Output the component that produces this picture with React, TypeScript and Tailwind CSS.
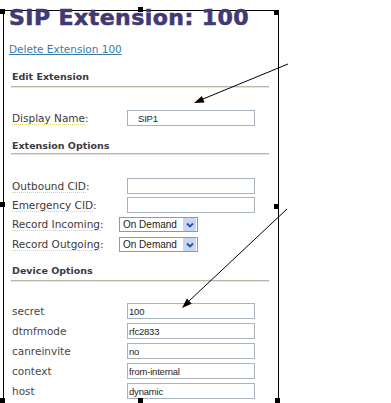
import React from "react";

const labelFont = "font-['DejaVu_Sans',sans-serif]";
const inputClasses =
  "h-[16px] w-[128px] border border-[#a9b3bd] bg-white pl-[1px] text-[9.5px] leading-[14px] tracking-[-0.2px] text-[#1e1e1e] font-['Liberation_Sans',Arial,sans-serif] outline-none";

const SectionHeader = ({ title, mt }: { title: string; mt: string }) => (
  <div
    className={`${mt} h-[12px] pl-[8px] text-[9.5px] leading-[12px] font-bold text-[#3a3a44] ${labelFont}`}
  >
    {title}
  </div>
);

const Rule = ({ mt }: { mt: string }) => (
  <div className={`${mt} ml-[7px] h-[2px] w-[258px] border-t border-[#b9b5a7] bg-[#e6e3da]`} />
);

const HelpLabel = ({ text, width }: { text: string; width: string }) => (
  <div className={`${width} shrink-0 text-[10.5px] leading-[13px] text-[#3a3a3a] ${labelFont}`}>
    <span className="border-b border-dotted border-[#e3cf7a]">{text}</span>:
  </div>
);

const TextRow = ({
  label,
  value,
  mt,
  help,
  pad,
}: {
  label: string;
  value: string;
  mt: string;
  help?: boolean;
  pad?: string;
}) => (
  <div className={`${mt} flex h-[16px] items-center pl-[8px]`}>
    {help ? (
      <HelpLabel text={label} width="w-[115px]" />
    ) : (
      <div className={`w-[115px] shrink-0 text-[10.5px] leading-[13px] text-[#484848] ${labelFont}`}>
        {label}
      </div>
    )}
    <input className={`${inputClasses} ${pad ?? ""}`} defaultValue={value} readOnly />
  </div>
);

const SelectRow = ({ label, mt }: { label: string; mt: string }) => (
  <div className={`${mt} flex h-[15px] items-center pl-[8px]`}>
    <HelpLabel text={label} width="w-[107px]" />
    <div className="flex h-[15px] w-[79px] items-center justify-between border border-[#7f9db9] bg-white pl-[3px] pr-[1px]">
      <span className="text-[10px] leading-[13px] text-[#222] font-['Liberation_Sans',Arial,sans-serif]">
        On Demand
      </span>
      <span className="flex h-[13px] w-[13px] items-center justify-center rounded-[1px] bg-[#c6d6f4]">
        <svg width="8" height="6" viewBox="0 0 8 6">
          <polyline points="1,1.5 4,4.5 7,1.5" fill="none" stroke="#2d4f9a" strokeWidth="1.8" />
        </svg>
      </span>
    </div>
  </div>
);

const Handle = ({ cls }: { cls: string }) => (
  <div className={`absolute h-[5px] w-[5px] bg-black ${cls}`} />
);

export default function App() {
  return (
    <div className="relative h-[403px] w-[391px] overflow-hidden bg-white">
      <div className="ml-[3px] mt-[10px] flex h-[393px] w-[276px] flex-col border-x border-t border-black">
        <div className="-mt-[4px] h-[22px] whitespace-nowrap pl-[5px] text-[22px] leading-[22px] font-bold text-[#3f3a72] font-['DejaVu_Sans',sans-serif] tracking-[0.45px] [-webkit-text-stroke:0.6px_#3f3a72]">
          SIP Extension: 100
        </div>
        <div className="mt-[14px] h-[13px] pl-[5px] text-[10.5px] leading-[13px]">
          <a href="#" className={`text-[#3a7aa8] underline ${labelFont}`}>
            Delete Extension 100
          </a>
        </div>

        <SectionHeader title="Edit Extension" mt="mt-[15px]" />
        <Rule mt="mt-[3px]" />
        <TextRow label="Display Name" value="SIP1" mt="mt-[22px]" help pad="pl-[10px]" />

        <SectionHeader title="Extension Options" mt="mt-[14px]" />
        <Rule mt="mt-[1px]" />
        <TextRow label="Outbound CID" value="" mt="mt-[23px]" help />
        <TextRow label="Emergency CID" value="" mt="mt-[3px]" help />
        <SelectRow label="Record Incoming" mt="mt-[4px]" />
        <SelectRow label="Record Outgoing" mt="mt-[5px]" />

        <SectionHeader title="Device Options" mt="mt-[13px]" />
        <Rule mt="mt-[3px]" />
        <TextRow label="secret" value="100" mt="mt-[21px]" />
        <TextRow label="dtmfmode" value="rfc2833" mt="mt-[4px]" />
        <TextRow label="canreinvite" value="no" mt="mt-[4px]" />
        <TextRow label="context" value="from-internal" mt="mt-[4px]" />
        <TextRow label="host" value="dynamic" mt="mt-[4px]" />
      </div>

      {/* selection handles */}
      <Handle cls="left-0 top-[9px]" />
      <Handle cls="left-[138px] top-[7px]" />
      <Handle cls="left-[274px] top-[10px]" />
      <Handle cls="left-0 top-[202px]" />
      <Handle cls="left-[274px] top-[204px]" />
      <Handle cls="left-0 top-[398px]" />
      <Handle cls="left-[138px] top-[398px]" />
      <Handle cls="left-[275px] top-[398px]" />

      {/* callout arrows */}
      <svg className="pointer-events-none absolute left-0 top-0" width="391" height="403">
        <line x1="288" y1="64" x2="203" y2="99" stroke="#000" strokeWidth="1" />
        <polygon points="194,103 204.5,102.4 201.9,96" fill="#000" />
        <line x1="287" y1="209" x2="189" y2="301" stroke="#000" strokeWidth="1" />
        <polygon points="182,308 191.7,303.7 186.9,298.6" fill="#000" />
      </svg>
    </div>
  );
}
